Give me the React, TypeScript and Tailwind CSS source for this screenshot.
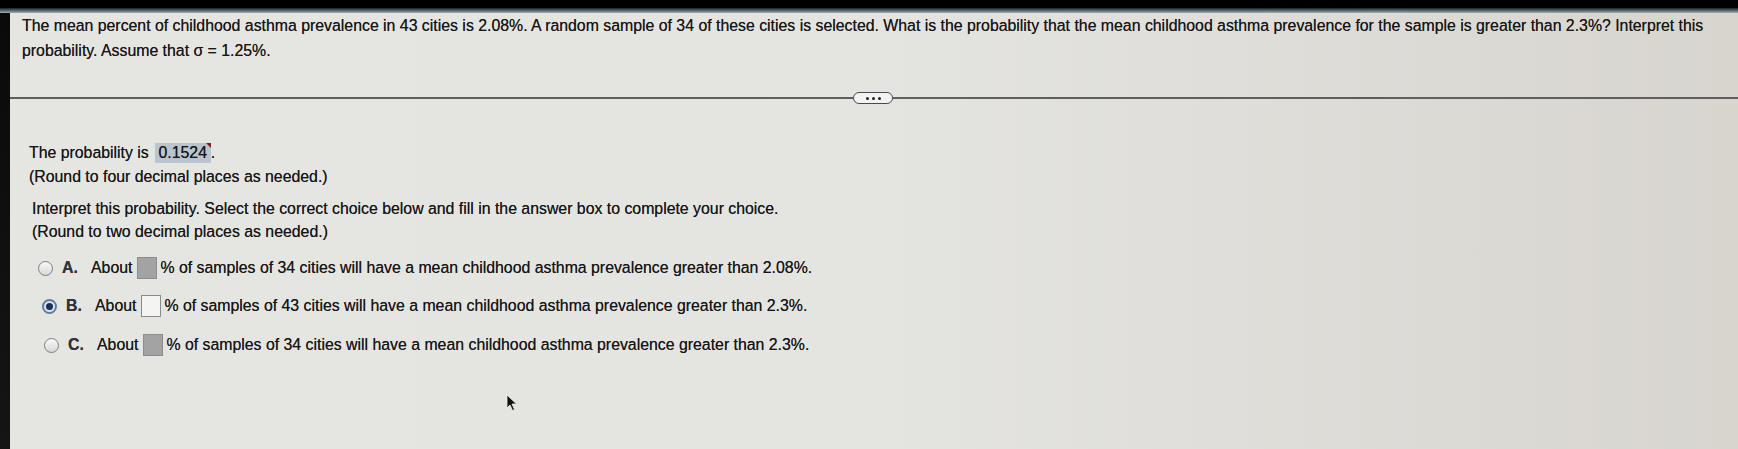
import React from "react";

const font = "font-['Liberation_Sans','Helvetica',Arial,sans-serif]";

function Radio({ selected }: { selected?: boolean }) {
  if (selected) {
    return (
      <span className="flex h-[15px] w-[15px] shrink-0 items-center justify-center rounded-full border-2 border-[#5b7da6] bg-[#dfe6ee]">
        <span className="h-[7px] w-[7px] rounded-full bg-[#1d2f55]" />
      </span>
    );
  }
  return <span className="h-[15px] w-[15px] shrink-0 rounded-full border-[1.5px] border-[#7d7d7d] bg-gradient-to-b from-[#fafafa] to-[#d8d8d8]" />;
}

function Option({
  letter,
  text,
  selected,
  boxFilled,
  indent,
}: {
  letter: string;
  text: string;
  selected?: boolean;
  boxFilled?: boolean;
  indent: string;
}) {
  return (
    <div className={`flex h-[38px] items-center ${indent}`}>
      <Radio selected={selected} />
      <span className="ml-[9px] w-[29px] font-bold text-[#2e3440]">{letter}</span>
      <span>About</span>
      <span
        className={
          boxFilled
            ? "ml-[5px] h-[22px] w-[20px] border border-[#8c8c8c] bg-[#a3a3a3]"
            : "ml-[5px] h-[22px] w-[20px] border border-[#8a8a8a] bg-[#f4f4f2]"
        }
      />
      <span className="ml-[3px]">{text}</span>
    </div>
  );
}

export default function App() {
  return (
    <div
      className={`flex h-[449px] w-[1738px] flex-col overflow-hidden bg-black ${font} text-[15.85px] text-[#161616] [text-shadow:0_0_0.4px_rgba(0,0,0,0.7)]`}
    >
      <div className="h-[8px] shrink-0 bg-black" />
      <div className="h-[5px] shrink-0 bg-gradient-to-b from-[#17242c] to-[#a9aeb0]" />
      <div className="flex flex-1">
        <div className="w-[10px] shrink-0 bg-gradient-to-b from-[#0a0a0a] to-[#151515]" />
        <div className="flex flex-1 flex-col bg-gradient-to-r from-[#e5e5e2] via-[#e4e4e1] to-[#d8d5cf]">
          {/* question */}
          <div className="pl-[12px] pr-[8px] leading-[25px]">
            The mean percent of childhood asthma prevalence in 43 cities is 2.08%. A random sample of 34 of these cities is selected. What is the probability that the mean childhood asthma prevalence for the sample is greater than 2.3%? Interpret this probability. Assume that σ = 1.25%.
          </div>

          {/* divider with more button */}
          <div className="mt-[29px] flex h-[12px] items-center">
            <div className="h-[2px] w-[843px] bg-[#5f5f5f]" />
            <div className="flex h-[12px] w-[40px] items-center justify-center gap-[3px] rounded-[6px] border-[1.5px] border-[#4a4a4a] bg-[#f3f3f3]">
              <span className="h-[3px] w-[3px] rounded-full bg-[#222]" />
              <span className="h-[3px] w-[3px] rounded-full bg-[#222]" />
              <span className="h-[3px] w-[3px] rounded-full bg-[#222]" />
            </div>
            <div className="h-[2px] flex-1 bg-[#5f5f5f]" />
          </div>

          {/* answer area */}
          <div className="mt-[37px] flex flex-col pl-[19px]">
            <div className="flex h-[24px] items-center">
              <span>The probability is</span>
              <span className="relative ml-[6px] flex h-[20px] w-[56px] items-center justify-center bg-[#b9c4cf]">
                0.1524
                <span className="absolute right-0 top-0 h-0 w-0 border-l-[5px] border-t-[5px] border-l-transparent border-t-[#7a1b22]" />
              </span>
              <span>.</span>
            </div>
            <div className="flex h-[23px] items-center">(Round to four decimal places as needed.)</div>

            <div className="mt-[9px] flex h-[24px] items-center pl-[3px]">
              Interpret this probability. Select the correct choice below and fill in the answer box to complete your choice.
            </div>
            <div className="flex h-[22px] items-center pl-[3px]">(Round to two decimal places as needed.)</div>

            <div className="mt-[6px] flex flex-col">
              <Option
                letter="A."
                indent="pl-[9px]"
                boxFilled
                text="% of samples of 34 cities will have a mean childhood asthma prevalence greater than 2.08%."
              />
              <Option
                letter="B."
                indent="pl-[13px]"
                selected
                text="% of samples of 43 cities will have a mean childhood asthma prevalence greater than 2.3%."
              />
              <div className="mt-[1px]">
                <Option
                  letter="C."
                  indent="pl-[15px]"
                  boxFilled
                  text="% of samples of 34 cities will have a mean childhood asthma prevalence greater than 2.3%."
                />
              </div>
            </div>

            {/* mouse pointer */}
            <div className="ml-[477px] mt-[30px]">
              <svg width="12" height="18" viewBox="0 0 12 18">
                <path d="M1 1 L1 14 L4 11 L6.5 16.5 L8.5 15.5 L6 10 L10.5 10 Z" fill="#111" stroke="#eee" strokeWidth="0.8" />
              </svg>
            </div>
          </div>
        </div>
      </div>
    </div>
  );
}
